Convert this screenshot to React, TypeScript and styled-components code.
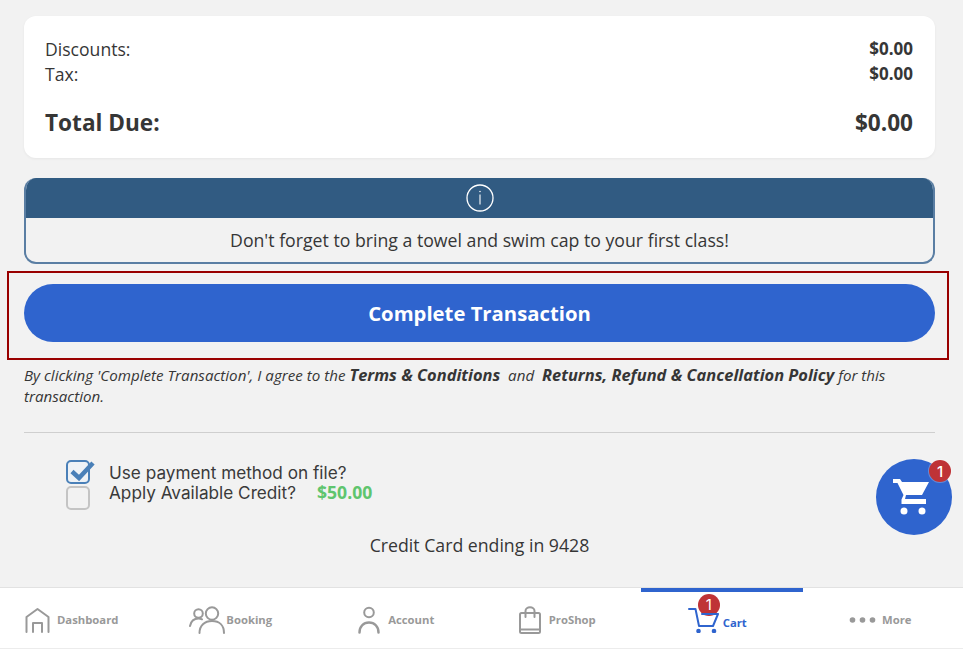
import styled, { createGlobalStyle } from 'styled-components'
import type { ReactNode } from 'react'

const GlobalStyle = createGlobalStyle`
  html, body {
    margin: 0;
    padding: 0;
    background: #f2f2f2;
    font-family: 'Open Sans', sans-serif;
    color: #363636;
  }
  * {
    box-sizing: border-box;
  }
`

const Page = styled.div`
  position: relative;
  display: flex;
  flex-direction: column;
  width: 963px;
  height: 649px;
  overflow: hidden;
`

const Content = styled.main`
  flex: 1;
  display: flex;
  flex-direction: column;
  padding: 16px 28px 0 24px;
`

const SummaryCard = styled.section`
  width: 911px;
  height: 142px;
  padding: 20px 22px 0 21px;
  background: #fff;
  border-radius: 12px;
  box-shadow: 0 1px 3px rgba(0, 0, 0, 0.05);
`

const SummaryRow = styled.div`
  display: flex;
  justify-content: space-between;
  align-items: center;
  height: 25px;
  font-size: 17.6px;

  b {
    font-size: 17px;
    font-weight: 700;
  }
`

const TotalRow = styled.div`
  display: flex;
  justify-content: space-between;
  align-items: center;
  height: 34px;
  margin-top: 19px;
  font-size: 22.6px;
  font-weight: 700;
`

const Notice = styled.section`
  width: 911px;
  height: 86px;
  margin-top: 20px;
  border: 2px solid #5a7ea3;
  border-top: 0;
  border-radius: 12px;
  overflow: hidden;
`

const NoticeHeader = styled.div`
  display: flex;
  justify-content: center;
  align-items: center;
  height: 40px;
  margin: 0 -2px;
  background: #315b82;
`

const NoticeBody = styled.p`
  margin: 0;
  padding-top: 10px;
  text-align: center;
  font-size: 17.7px;
  line-height: 25px;
`

const Highlight = styled.div`
  width: 942px;
  height: 89px;
  margin: 7px 0 0 -17px;
  padding: 11px 0 0 15px;
  border: 2px solid #990000;
`

const CompleteButton = styled.button`
  display: block;
  width: 911px;
  height: 58px;
  border: 0;
  border-radius: 29px;
  background: #2f64ce;
  color: #fff;
  font-family: inherit;
  font-size: 20.3px;
  font-weight: 700;
`

const Legal = styled.p`
  width: 890px;
  margin: 4px 0 0;
  font-size: 15.15px;
  font-style: italic;
  line-height: 21px;

  b {
    font-size: 16.45px;
    font-weight: 700;
  }
`

const Divider = styled.hr`
  width: 911px;
  height: 1px;
  margin: 25px 0 0;
  border: 0;
  background: #cfcfcf;
`

const Options = styled.div`
  margin: 27px 0 0 42px;
`

const OptionRow = styled.div`
  display: flex;
  align-items: flex-start;
  height: 26px;
  font-family: Inter, sans-serif;
  font-size: 17.2px;
  color: #3a3a3a;
`

const OptionText = styled.span<{ $raised?: boolean }>`
  margin-top: ${(p) => (p.$raised ? '-4px' : '3px')};
  line-height: 20px;
`

const Checkbox = styled.span<{ $checked?: boolean }>`
  position: relative;
  flex: none;
  width: 24px;
  height: 24px;
  margin-right: 19px;
  border: 2px solid ${(p) => (p.$checked ? '#4a80b8' : '#c4c4c4')};
  border-radius: 5px;
  background: ${(p) => (p.$checked ? '#eef2f6' : '#f2f2f2')};

  svg {
    position: absolute;
    top: -5px;
    left: 1px;
  }
`

const CreditAmount = styled.span`
  margin-left: 21px;
  font-family: 'Open Sans', sans-serif;
  font-size: 17.6px;
  font-weight: 700;
  color: #5fc56e;
`

const CardOnFile = styled.p`
  width: 911px;
  margin: 21px 0 0;
  text-align: center;
  font-size: 17.7px;
  line-height: 25px;
`

const FloatingCart = styled.button`
  position: absolute;
  top: 459px;
  left: 876px;
  display: flex;
  justify-content: center;
  align-items: center;
  width: 76px;
  height: 76px;
  padding: 0 6px 0 0;
  border: 0;
  border-radius: 50%;
  background: #2f64ce;
`

const Badge = styled.span<{ $floating?: boolean }>`
  position: absolute;
  top: ${(p) => (p.$floating ? '1px' : '-13px')};
  left: ${(p) => (p.$floating ? '53px' : '10px')};
  display: flex;
  justify-content: center;
  align-items: center;
  width: 22px;
  height: 22px;
  border-radius: 50%;
  background: #bf3336;
  box-shadow: 0 0 0 1px rgba(255, 255, 255, 0.25);
  color: #fff;
  font-family: Inter, sans-serif;
  font-size: 15px;
  font-weight: ${(p) => (p.$floating ? 500 : 400)};
`

const TabBar = styled.nav`
  flex: none;
  display: grid;
  grid-template-columns: repeat(6, 1fr);
  height: 62px;
  background: #fff;
  border-top: 1px solid #e2e2e2;
  border-bottom: 1px solid #ececec;
`

const Tab = styled.div<{ $active?: boolean; $shift: number; $gap: number }>`
  display: flex;
  justify-content: center;
  align-items: center;
  gap: ${(p) => p.$gap}px;
  padding-right: ${(p) => p.$shift * 2}px;
  margin-bottom: 1px;
  margin-left: ${(p) => (p.$active ? '-1px' : '0')};
  border-top: 4px solid ${(p) => (p.$active ? '#2f64ce' : 'transparent')};
  font-size: 11.3px;
  font-weight: 700;
  color: ${(p) => (p.$active ? '#2f64ce' : '#999')};
`

const TabIcon = styled.span`
  position: relative;
  display: flex;

  svg {
    position: relative;
    z-index: 1;
  }
`

const TabLabel = styled.span<{ $active?: boolean }>`
  margin-top: ${(p) => (p.$active ? '6px' : '0')};
`

function Icon({ w, h, children }: { w: number; h: number; children: ReactNode }) {
  return (
    <svg
      width={w}
      height={h}
      viewBox={`0 0 ${w} ${h}`}
      fill="none"
      stroke="currentColor"
      strokeWidth="2"
      strokeLinecap="round"
      strokeLinejoin="round"
    >
      {children}
    </svg>
  )
}

export default function App() {
  return (
    <Page>
      <GlobalStyle />
      <Content>
        <SummaryCard>
          <SummaryRow>
            <span>Discounts:</span>
            <b>$0.00</b>
          </SummaryRow>
          <SummaryRow>
            <span>Tax:</span>
            <b>$0.00</b>
          </SummaryRow>
          <TotalRow>
            <span>Total Due:</span>
            <span>$0.00</span>
          </TotalRow>
        </SummaryCard>

        <Notice>
          <NoticeHeader>
            <svg width="28" height="28" viewBox="0 0 28 28" fill="none" stroke="#fff">
              <circle cx="14" cy="14" r="13" strokeWidth="1.3" />
              <path d="M14 10.5v10" strokeWidth="1.1" />
              <circle cx="14" cy="7.5" r="0.5" fill="#fff" strokeWidth="0.5" />
            </svg>
          </NoticeHeader>
          <NoticeBody>Don't forget to bring a towel and swim cap to your first class!</NoticeBody>
        </Notice>

        <Highlight>
          <CompleteButton>Complete Transaction</CompleteButton>
        </Highlight>

        <Legal>
          By clicking 'Complete Transaction', I agree to the <b>Terms &amp; Conditions</b>&nbsp; and&nbsp;{' '}
          <b>Returns, Refund &amp; Cancellation Policy</b> for this transaction.
        </Legal>

        <Divider />

        <Options>
          <OptionRow>
            <Checkbox $checked>
              <svg width="26" height="24" viewBox="0 0 26 24" fill="none">
                <path d="M3 14.500l7 6.500L24 6" stroke="#4a80b8" strokeWidth="4.500" />
              </svg>
            </Checkbox>
            <OptionText>Use payment method on file?</OptionText>
          </OptionRow>
          <OptionRow>
            <Checkbox />
            <OptionText $raised>
              Apply Available Credit?
              <CreditAmount>$50.00</CreditAmount>
            </OptionText>
          </OptionRow>
        </Options>

        <CardOnFile>Credit Card ending in 9428</CardOnFile>
      </Content>

      <FloatingCart>
        <svg width="36" height="38" viewBox="0 0 36 38" fill="#fff">
          <path d="M0 1H7L9 4H36L29 17H13L12 21H33V26H8.500V21.500L10.500 17L4.500 5H0Z" />
          <circle cx="11" cy="33" r="3.500" />
          <circle cx="29" cy="33" r="3.500" />
        </svg>
        <Badge $floating>1</Badge>
      </FloatingCart>

      <TabBar>
        <Tab $shift={8.5} $gap={7}>
          <TabIcon>
            <Icon w={25} h={26}>
              <path d="M1.500 25V10L12.500 2l11 8v15" />
              <path d="M8 25V16h9v9" />
            </Icon>
          </TabIcon>
          <TabLabel>Dashboard</TabLabel>
        </Tab>
        <Tab $shift={10} $gap={1}>
          <TabIcon>
            <Icon w={36} h={28}>
              <circle cx="9.500" cy="7.500" r="4.300" />
              <circle cx="23" cy="7.500" r="6.200" />
              <path d="M1 20c1-5 4-7.500 8.500-7.500 1.500 0 2.500 .3 3.500 .8" />
              <path d="M10.500 27c0-7.500 5-12 12.500-12s12 4.500 12 12" />
            </Icon>
          </TabIcon>
          <TabLabel>Booking</TabLabel>
        </Tab>
        <Tab $shift={5} $gap={8}>
          <TabIcon>
            <Icon w={22} h={28}>
              <circle cx="11" cy="6.500" r="4.800" />
              <path d="M1.500 26.500c0-6 4-10 9.500-10s9.500 4 9.500 10" strokeWidth="2.500" />
            </Icon>
          </TabIcon>
          <TabLabel>Account</TabLabel>
        </Tab>
        <Tab $shift={4.5} $gap={8}>
          <TabIcon>
            <Icon w={22} h={28}>
              <rect x="1" y="7" width="20" height="20" rx="1.500" />
              <path d="M1 23.500h20" />
              <path d="M6.500 11V5c0-5 9-5 9 0v6" />
            </Icon>
          </TabIcon>
          <TabLabel>ProShop</TabLabel>
        </Tab>
        <Tab $active $shift={4.5} $gap={4}>
          <TabIcon>
            <Icon w={31} h={26}>
              <path d="M1 2h6.500l3.500 17h14l5-12H14" />
              <circle cx="10.500" cy="24" r="1.300" fill="currentColor" />
              <circle cx="26" cy="24" r="1.300" fill="currentColor" />
            </Icon>
            <Badge>1</Badge>
          </TabIcon>
          <TabLabel $active>Cart</TabLabel>
        </Tab>
        <Tab $shift={2.5} $gap={6}>
          <TabIcon>
            <svg width="27" height="8" viewBox="0 0 27 8" fill="currentColor">
              <circle cx="3.500" cy="4" r="2.800" />
              <circle cx="13.500" cy="4" r="2.800" />
              <circle cx="23.500" cy="4" r="2.800" />
            </svg>
          </TabIcon>
          <TabLabel>More</TabLabel>
        </Tab>
      </TabBar>
    </Page>
  )
}
